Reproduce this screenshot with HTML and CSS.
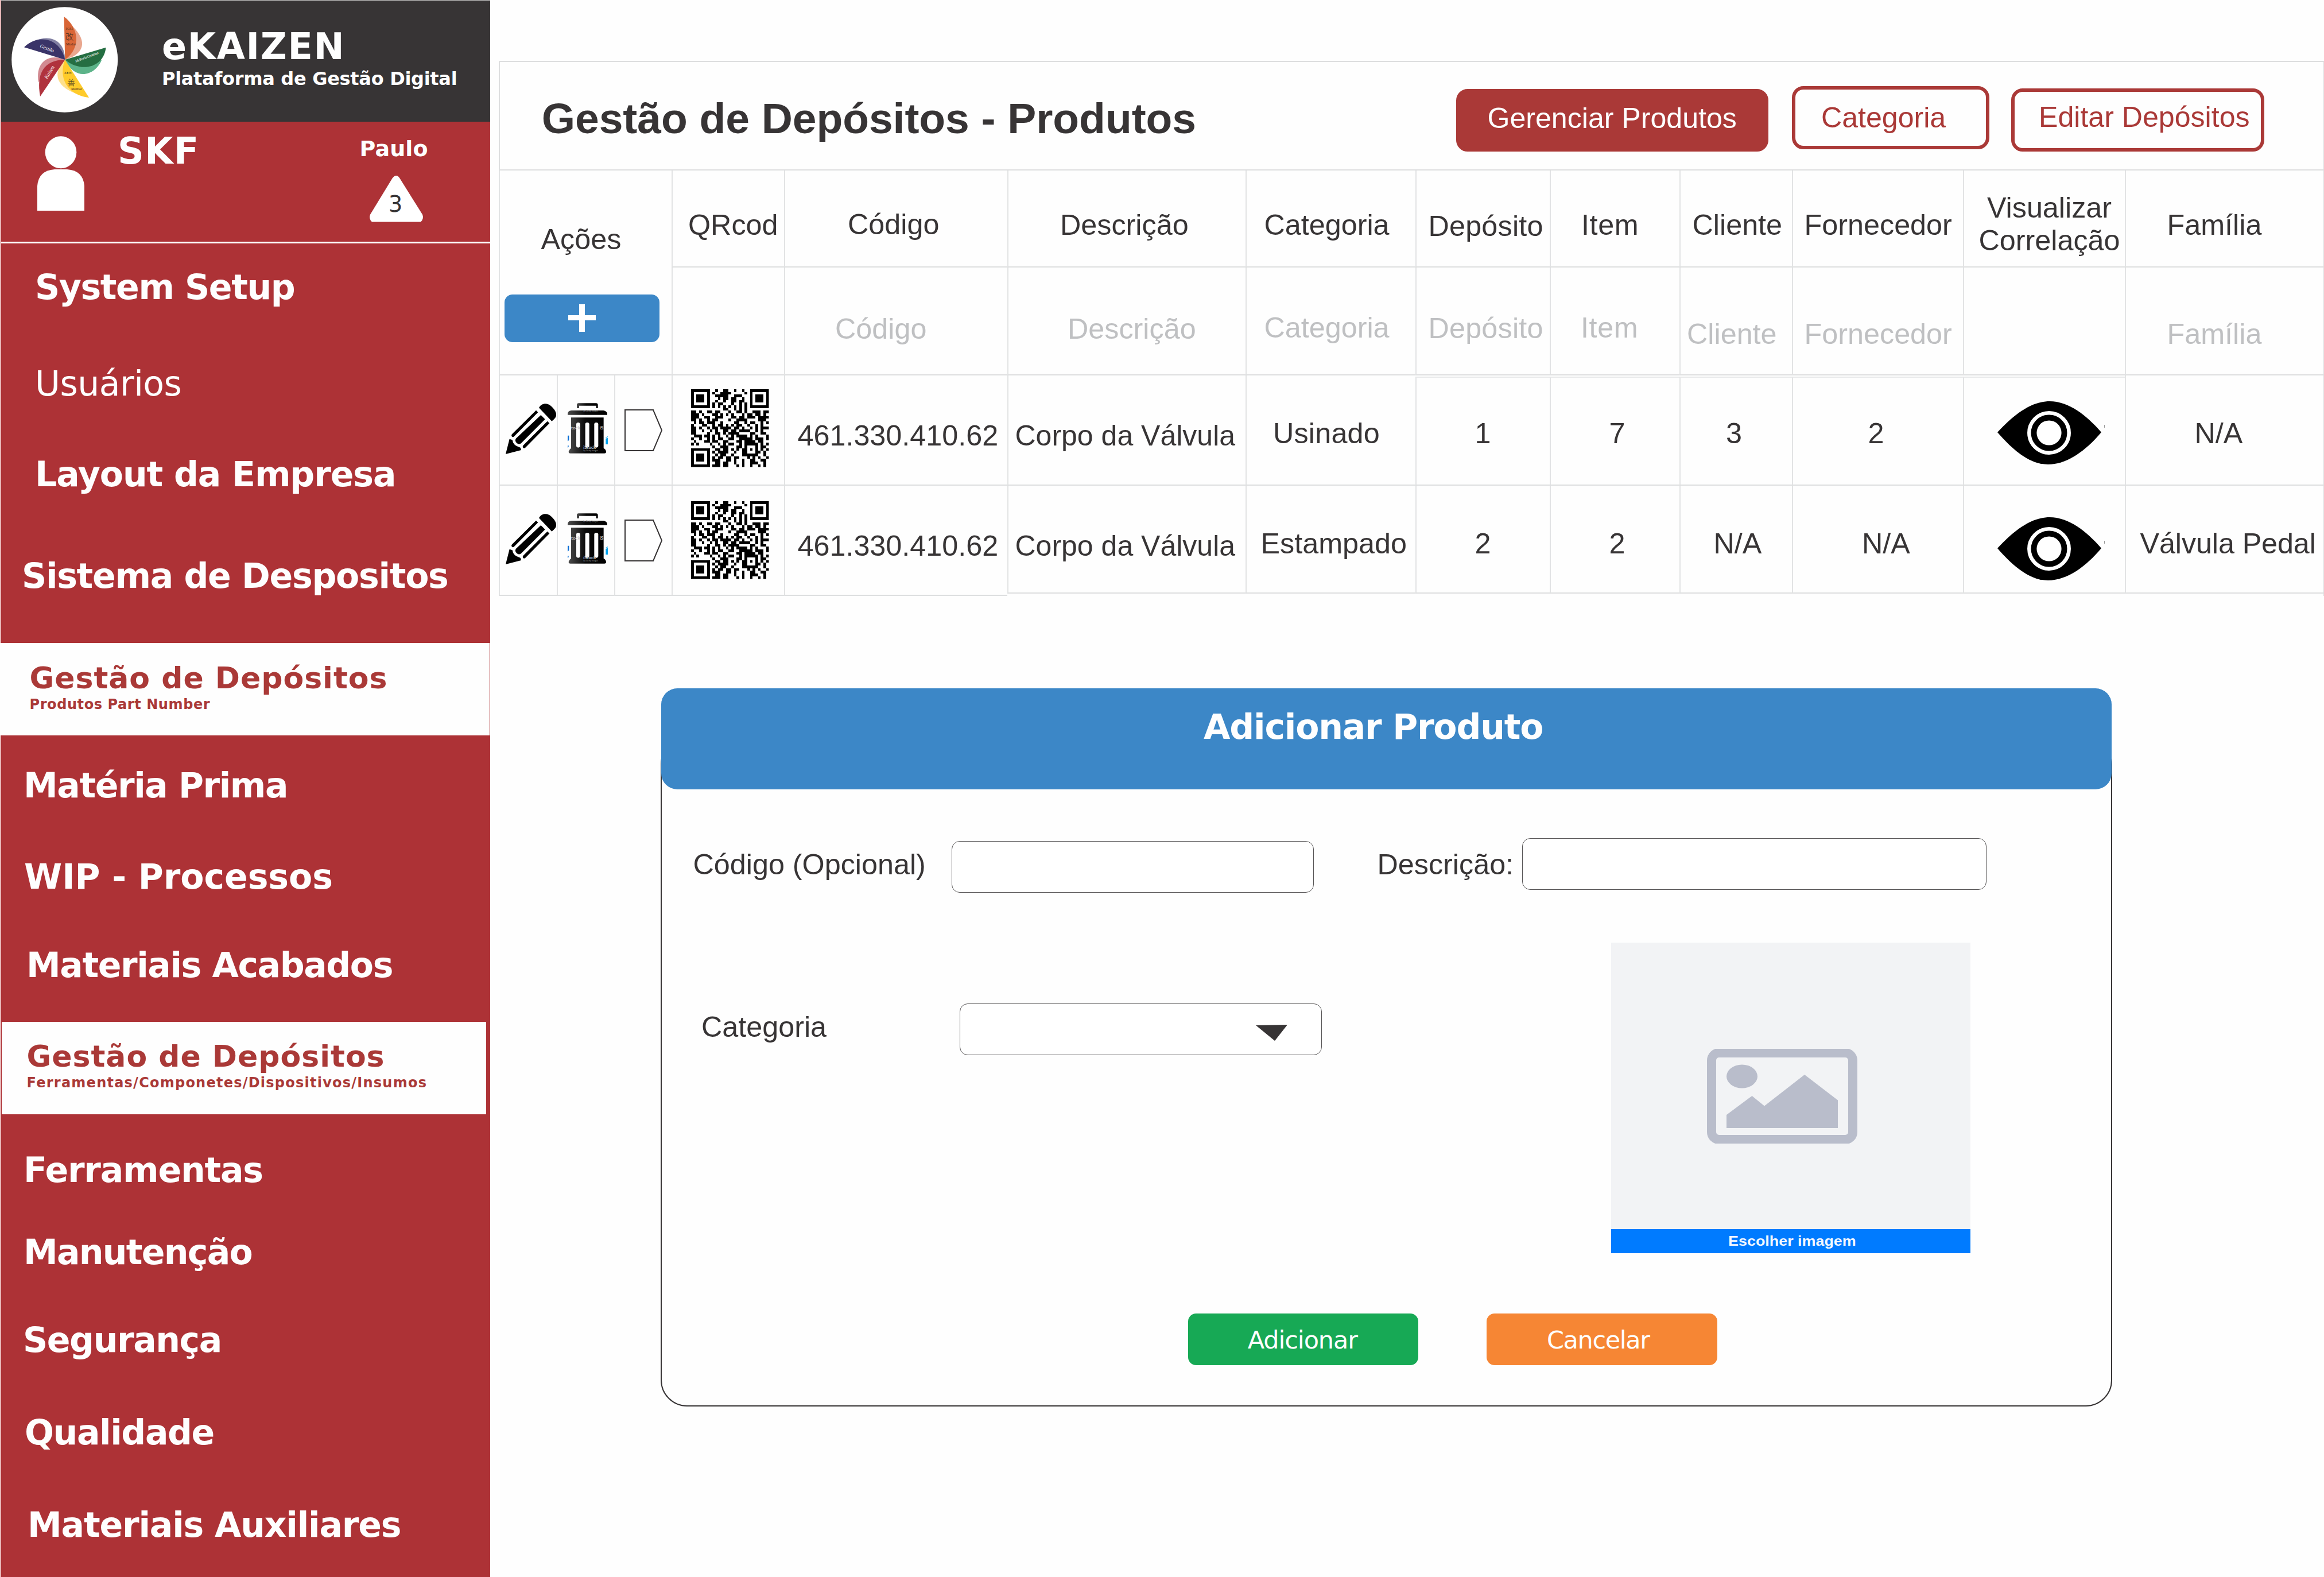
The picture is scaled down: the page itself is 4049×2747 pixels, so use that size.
FILE: index.html
```html
<!DOCTYPE html>
<html lang="pt-BR">
<head>
<meta charset="utf-8">
<title>eKAIZEN - Gestão de Depósitos</title>
<link rel="stylesheet" href="styles.css">
</head>
<body>
<svg class="defs" width="0" height="0">
  <defs>
    <linearGradient id="metal" x1="0" y1="0" x2="1" y2="0"><stop offset="0" stop-color="#4a4a4a"/><stop offset=".45" stop-color="#0a0a0a"/><stop offset="1" stop-color="#000"/></linearGradient>
    <symbol id="pencil" viewBox="0 0 264 264">
      <path d="M174 22 C186 -2 216 -6 236 12 C262 34 272 60 258 76 Q252 84 241 92 Z"/>
      <path d="M159 35 L169 46 L44 172 Q37 178 32 172 Q27 166 33 160 Z"/>
      <path d="M184 60 L206 82 L81 207 Q70 216 59 207 Q45 195 54 182 Z"/>
      <path d="M218 92 L229 103 L103 230 Q96 236 91 230 Q87 224 92 218 Z"/>
      <path d="M20 185 L35 190 Q38 220 77 230 L81 243 L0 264 Z"/>
    </symbol>
    <symbol id="trash" viewBox="0 0 210 264">
      <path d="M48 27 V10 Q48 1 57 1 H149 Q158 1 158 10 V27 H149 V14 H60 V27 Z" fill="url(#metal)"/>
      <path d="M0 62 V56 Q2 40 20 39 H187 Q205 42 207 56 V62 Z" fill="url(#metal)"/>
      <path d="M18 76 H188 V236 Q201 243 201 256 Q201 263 192 263 H14 Q5 263 5 254 Q7 243 18 236 Z" fill="url(#metal)"/>
      <rect x="45" y="102" width="20" height="131" rx="10" fill="#fff"/>
      <rect x="92" y="102" width="21" height="131" rx="10" fill="#fff"/>
      <rect x="139" y="102" width="21" height="131" rx="10" fill="#fff"/>
      <text class="mark" x="18" y="138">tock</text>
      <text class="mark" x="167" y="138">iS</text>
      <text class="mark" x="82" y="239">iStock</text>
      <text class="mark-small" x="82" y="252">by Getty Images</text>
      <text class="mark-small" x="82" y="45">by Getty Images</text>
      <path d="M0 170 h7 v24 l-7 6 Z M0 222 h5 v8 l-5 4 Z" fill="#0b6fd6"/>
      <path d="M199 186 l11 -4 v34 h-11 Z M199 180 l11 -6 v4 l-11 5 Z" fill="#00a4ef"/>
    </symbol>
    <symbol id="tag" viewBox="0 0 66 73"><path d="M1 1 H50 L65 36.5 L50 72 H1 Z" fill="#fff" stroke="#373435" stroke-width="2"/></symbol>
    <symbol id="eye" viewBox="0 0 188 112">
      <path d="M0 55 C28 25 58 1 91 1 C124 1 155 25 181 55 C155 86 122 111 88 111 C56 111 27 86 0 55 Z"/>
      <circle cx="90" cy="56" r="34.7" fill="none" stroke="#fff" stroke-width="6.5"/>
      <circle cx="90" cy="56" r="21.6" fill="#fff"/>
      <path d="M186 42 h1 v5 h-1 Z" fill="#999"/>
    </symbol>
    <symbol id="qr" viewBox="0 0 29 29"><path id="qr-path" shape-rendering="crispEdges"/></symbol>
  </defs>
</svg>
<div class="app">
  <aside class="sidebar">
    <header class="brand">
      <svg class="logo" viewBox="21 12 186 184">
        <ellipse cx="113.7" cy="104" rx="92.5" ry="91.7" fill="#fff"/>
        <path d="M123 42 C151 66 154 92 114.3 104 Z" fill="#e9a78f"/>
        <path d="M112.6 29 C137 47 144 82 114.3 104 Z" fill="#d96637"/>
        <path d="M178 105 C166 132 132 142 114.3 104 Z" fill="#5cb389"/>
        <path d="M185.5 82.7 C182 117 143 128 114.3 104 Z" fill="#256e42"/>
        <path d="M140 165 C100 154 90 128 114.3 104 Z" fill="#fee08c"/>
        <path d="M156 170 C118 166 102 135 114.3 104 Z" fill="#ffcb2b"/>
        <path d="M68 143 C62 108 86 92 114.3 104 Z" fill="#d28a91"/>
        <path d="M71 168 C64 130 76 104 114.3 104 Z" fill="#b0323d"/>
        <path d="M62 71 C86 60 114 68 114.3 104 Z" fill="#8280a3"/>
        <path d="M43 82.3 C67 58 106 66 114.3 104 Z" fill="#3a3468"/>
        <g class="logo-text">
          <text x="116" y="52">KAI</text><text class="kanji" x="115" y="69">改</text><text x="116" y="79">Mudar</text>
          <text class="light" x="133" y="109" transform="rotate(-21 133 109)" textLength="43">Melhoria Contínua</text>
          <text x="113" y="129">ZEN</text><text class="kanji" x="118" y="149">善</text><text x="125" y="157">Melhor</text>
          <text class="light big" x="83" y="138" transform="rotate(-58 83 138)">Kaizen</text>
          <text class="light big" x="70" y="82" transform="rotate(22 70 82)">Gestão</text>
        </g>
      </svg>
      <div>
        <div class="brand-name">eKAIZEN</div>
        <div class="brand-sub">Plataforma de Gestão Digital</div>
      </div>
    </header>
    <section class="user">
      <svg class="person" viewBox="0 0 82 130"><ellipse cx="41" cy="28.300" rx="27.300" ry="28" fill="#fff"/><path d="M0 130 V87 Q2 60 30 58 H52 Q80 60 82 87 V130 Z" fill="#fff"/></svg>
      <div class="company">SKF</div>
      <div class="account">
        <div class="user-name">Paulo</div>
        <svg class="alerts" viewBox="0 0 96 82"><path d="M41 5 Q48 -4 54 5 L94 69 Q97 76 91 82 H5 Q-1 76 2 69 Z" fill="#fff"/><text x="34" y="64">3</text></svg>
      </div>
    </section>
    <nav class="menu">
      <a class="item p59 setup">System Setup</a>
      <a class="item p59 regular">Usuários</a>
      <a class="item p59 layout">Layout da Empresa</a>
      <a class="item p36 deposits">Sistema de Despositos</a>
      <a class="group"><span class="group-title">Gestão de Depósitos</span><span class="group-sub">Produtos Part Number</span></a>
      <a class="item p39">Matéria Prima</a>
      <a class="item p40 wip">WIP - Processos</a>
      <a class="item p44 finished">Materiais Acabados</a>
      <a class="group group-inset"><span class="group-title">Gestão de Depósitos</span><span class="group-sub wide">Ferramentas/Componetes/Dispositivos/Insumos</span></a>
      <a class="item p39 tools">Ferramentas</a>
      <a class="item p39 upkeep">Manutenção</a>
      <a class="item p38">Segurança</a>
      <a class="item p42">Qualidade</a>
      <a class="item p46 aux">Materiais Auxiliares</a>
    </nav>
  </aside>
  <main class="content">
    <header class="page-head">
      <h1>Gestão de Depósitos - Produtos</h1>
      <div class="tabs">
        <div class="tab tab-active">Gerenciar Produtos</div>
        <div class="tab tab-category">Categoria</div>
        <div class="tab tab-edit">Editar Depósitos</div>
      </div>
    </header>
    <div class="thead">
      <div class="cell actions"><span>Ações</span>
        <div class="add"><svg viewBox="0 0 48 48"><path d="M19 0h10v19h19v9H29v20H19V28H0v-9h19Z" fill="#fff"/></svg></div>
      </div>
      <div class="cell">QRcod</div><div class="cell">Código</div><div class="cell">Descrição</div><div class="cell">Categoria</div><div class="cell">Depósito</div><div class="cell">Item</div><div class="cell">Cliente</div><div class="cell">Fornecedor</div><div class="cell two-line">Visualizar<br>Correlação</div><div class="cell">Família</div>
      <div class="cell filter"></div><div class="cell filter">Código</div><div class="cell filter">Descrição</div><div class="cell filter">Categoria</div><div class="cell filter">Depósito</div><div class="cell filter">Item</div><div class="cell filter low">Cliente</div><div class="cell filter low">Fornecedor</div><div class="cell filter"></div><div class="cell filter low">Família</div>
    </div>
    <div class="row first">
      <div class="cell"><svg class="i-pencil"><use href="#pencil"/></svg></div>
      <div class="cell"><svg class="i-trash"><use href="#trash"/></svg></div>
      <div class="cell"><svg class="i-tag"><use href="#tag"/></svg></div>
      <div class="cell"><svg class="i-qr"><use href="#qr"/></svg></div>
      <div class="cell">461.330.410.62</div><div class="cell">Corpo da Válvula</div><div class="cell">Usinado</div><div class="cell">1</div><div class="cell">7</div><div class="cell">3</div><div class="cell">2</div>
      <div class="cell"><svg class="i-eye"><use href="#eye"/></svg></div><div class="cell">N/A</div>
    </div>
    <div class="row last">
      <div class="cell"><svg class="i-pencil"><use href="#pencil"/></svg></div>
      <div class="cell"><svg class="i-trash"><use href="#trash"/></svg></div>
      <div class="cell"><svg class="i-tag"><use href="#tag"/></svg></div>
      <div class="cell"><svg class="i-qr"><use href="#qr"/></svg></div>
      <div class="cell">461.330.410.62</div><div class="cell">Corpo da Válvula</div><div class="cell">Estampado</div><div class="cell">2</div><div class="cell">2</div><div class="cell">N/A</div><div class="cell">N/A</div>
      <div class="cell"><svg class="i-eye"><use href="#eye"/></svg></div><div class="cell">Válvula Pedal</div>
    </div>
    <section class="dialog">
      <h2>Adicionar Produto</h2>
      <div class="dialog-body">
        <div class="fields">
          <label class="l-code">Código (Opcional)</label><div class="input in-code"></div>
          <label class="l-desc">Descrição:</label><div class="input in-desc"></div>
        </div>
        <div class="fields second">
          <label class="l-cat">Categoria</label>
          <div class="input select"><svg viewBox="0 0 55 28"><path d="M0 1 L55 0 L33 28 Z" fill="#373435"/></svg></div>
          <div class="upload">
            <div class="preview"><svg viewBox="0 0 264 165"><rect x="9" y="7" width="246" height="151" rx="13" fill="none" stroke="#b9bdcb" stroke-width="16"/><ellipse cx="62" cy="48" rx="27" ry="20.500" fill="#b9bdcb"/><path d="M35 115 L79.500 82 L101 99.500 L171 45 L229 89.500 V138 H35 Z" fill="#b9bdcb"/></svg></div>
            <div class="choose"><span>Escolher imagem</span></div>
          </div>
        </div>
        <div class="buttons"><div class="btn ok">Adicionar</div><div class="btn cancel">Cancelar</div></div>
      </div>
    </section>
  </main>
</div>
<script src="qr.js"></script>
</body>
</html>
```
FILE: styles.css
```css
* { box-sizing: border-box; }
body { margin: 0; background: #fefefe; color: #373435; font-family: "Liberation Sans", Arial, sans-serif; font-size: 50.3px; line-height: 58px; }
svg { display: block; flex: none; }
.defs { position: absolute; }
.app { display: flex; width: 4049px; height: 2747px; overflow: hidden; }

/* sidebar */
.sidebar { flex: none; width: 854px; border-left: 2px solid #e9b9ba; background: #ad3236; color: #fefefe; font-family: "DejaVu Sans", Verdana, sans-serif; font-weight: bold; }
.brand { display: flex; height: 212px; border-top: 1px solid #c8c8c8; background: #373435; padding: 11px 0 0 18px; }
.logo { width: 186px; height: 184px; }
.logo-text { font: 6.500px "Liberation Serif", serif; fill: #3a2a20; }
.logo-text .kanji { font: 14px "Noto Sans CJK JP", sans-serif; font-weight: 300; }
.logo-text .light { fill: #fff; font-style: italic; }
.logo-text .big { font-size: 9px; }
.brand > div { padding: 34px 0 0 76px; white-space: nowrap; }
.brand-name { font-size: 63.500px; line-height: 70px; letter-spacing: 1.680px; }
.brand-sub { font-size: 32px; line-height: 40px; margin-top: 1px; letter-spacing: -0.3px; }
.user { display: flex; height: 212px; border-bottom: 3px solid #fefefe; }
.person { width: 82px; height: 130px; margin: 25px 0 0 63px; }
.company { width: 421.500px; margin: 16px 0 0 58px; font-size: 63.500px; line-height: 70px; letter-spacing: 1.400px; }
.account { padding-top: 23.600px; }
.user-name { font-size: 38px; line-height: 46px; letter-spacing: 0.1px; }
.alerts { width: 95px; height: 82px; margin: 23.400px 0 0 16px; overflow: visible; }
.alerts text { font-size: 39px; font-weight: normal; fill: #373435; }
.menu { display: grid; grid-template-rows: 152px 184px 131px 229px 161px 174.400px 143.600px 181px 161px 193.600px 92.200px 214.800px 107.200px 198px; }
.item { display: flex; align-items: center; font-size: 60px; letter-spacing: -1.400px; white-space: nowrap; }
.regular { font-weight: normal; letter-spacing: -0.5px; }
.layout { letter-spacing: -1.080px; }
.deposits { padding-bottom: 5px; letter-spacing: -1.290px; }
.wip { letter-spacing: -0.050px; }
.finished { padding-bottom: 16px; }
.tools { letter-spacing: -1.170px; }
.upkeep { letter-spacing: -1.700px; }
.aux { padding-top: 16px; letter-spacing: -1.150px; }
.p36 { padding-left: 36px; } .p38 { padding-left: 38px; } .p39 { padding-left: 39px; } .p40 { padding-left: 40px; }
.p42 { padding-left: 41px; } .p44 { padding-left: 44px; } .p46 { padding-left: 46px; } .p59 { padding-left: 59px; }
.group { display: flex; flex-direction: column; margin-left: -2px; margin-right: 1px; padding: 30.500px 0 0 51.500px; background: #fefefe; color: #aa3937; white-space: nowrap; }
.group-title { font-size: 52px; line-height: 60px; letter-spacing: 1px; }
.group-sub { margin-top: 1px; font-size: 24px; line-height: 30px; letter-spacing: 0.580px; }
.group-sub.wide { letter-spacing: 1.240px; }
.group-inset { margin-left: 1px; margin-right: 7px; padding-left: 43.600px; }

/* page header */
.content { flex: none; width: 3180px; margin-left: 15px; padding-top: 106px; }
.page-head { display: flex; height: 191px; border: 2px solid #dddedf; border-right-width: 1px; }
h1 { margin: 53px 0 0 72.700px; font-size: 75px; line-height: 90px; letter-spacing: -0.050px; white-space: nowrap; }
.tabs { display: flex; align-items: flex-start; margin: 42px 103px 0 auto; }
.tab { height: 110px; border: 6px solid #aa3937; border-radius: 20px; color: #aa3937; font-size: 50.100px; white-space: nowrap; display: flex; align-items: center; }
.tab-active { width: 544px; margin: 5px 41px 0 0; padding: 0 0 8px 48.500px; height: 109px; background: #aa3937; color: #fefefe; }
.tab-category { width: 344px; margin-right: 38px; padding-left: 45px; }
.tab-edit { width: 441px; margin-top: 4px; padding: 0 0 11px 42px; }

/* product table */
.thead, .row { display: grid; border-right: 1px solid #dddedf; }
.thead { grid-template: 169px 188px / 301px 196px 389px 415px 296px 234px 226px 196px 298px 282px 347px; }
.row { grid-template-columns: 101px 100px 100px 196px 389px 415px 296px 234px 226px 196px 298px 282px 347px; }
.cell { border-left: 2px solid #e2e3e4; border-bottom: 2px solid #dddedf; white-space: nowrap; padding-top: 66px; }
.actions { grid-row: span 2; padding-top: 90.600px; }
.actions span { display: block; padding-left: 71.500px; }
.add { display: flex; align-items: center; justify-content: center; width: 270px; height: 83px; margin: 67px 0 0 8px; border-radius: 14px; background: #3c87c7; }
.add svg { width: 48px; height: 48px; }
.thead .cell:nth-child(2) { padding-left: 27px; }
.thead .cell:nth-child(3) { padding-left: 109px; padding-top: 65px; }
.thead .cell:nth-child(4) { padding-left: 90px; }
.thead .cell:nth-child(5), .thead .cell:nth-child(15) { padding-left: 30.500px; }
.thead .cell:nth-child(6), .thead .cell:nth-child(16) { padding-left: 20.500px; letter-spacing: 0.2px; }
.thead .cell:nth-child(6) { padding-top: 67.500px; }
.thead .cell:nth-child(7) { padding-left: 53px; letter-spacing: 0.6px; }
.thead .cell:nth-child(8) { padding-left: 20.500px; }
.thead .cell:nth-child(9), .thead .cell:nth-child(19) { padding-left: 19.600px; }
.thead .two-line { padding: 35.600px 4px 0 21px; line-height: 57px; text-align: center; }
.thead .cell:nth-child(11), .thead .cell:nth-child(21) { padding-left: 71.500px; }
.filter { padding-top: 75.600px; color: #bfc0c2; }
.thead .cell:nth-child(13) { padding-left: 87px; padding-top: 77.600px; }
.thead .cell:nth-child(14) { padding-left: 103px; padding-top: 77.600px; }
.thead .cell:nth-child(16) { padding-top: 77px; }
.thead .cell:nth-child(17) { padding-left: 52px; letter-spacing: 0.6px; }
.thead .cell:nth-child(18) { padding-left: 11px; }
.filter.low { padding-top: 86.600px; }
.row.first { height: 192px; }
.row.last { height: 192px; }
.row .cell { padding-top: 71.500px; }
.row .cell:nth-child(1) { padding: 49px 0 0 10px; }
.row .cell:nth-child(2) { padding: 48px 0 0 17px; }
.row .cell:nth-child(3) { padding: 59px 0 0 16px; }
.row .cell:nth-child(4) { padding: 24px 0 0 32px; }
.row.last .cell:nth-child(4) { padding-top: 27px; }
.row .cell:nth-child(5) { padding: 75.600px 0 0 21.500px; }
.row .cell:nth-child(6) { padding: 75.600px 0 0 11.500px; font-size: 50px; }
.row .cell:nth-child(7) { padding-left: 46px; letter-spacing: 0.2px; }
.row.last .cell:nth-child(7) { padding-left: 24.500px; letter-spacing: 0; }
.row .cell:nth-child(8), .row .cell:nth-child(9) { padding-left: 101.500px; }
.row .cell:nth-child(10) { padding-left: 79px; }
.row.last .cell:nth-child(10) { padding-left: 57.500px; }
.row .cell:nth-child(11) { padding-left: 130.500px; }
.row.last .cell:nth-child(11) { padding-left: 120px; }
.row .cell:nth-child(12) { padding: 43px 0 0 58px; }
.row.last .cell:nth-child(12) { padding-top: 54px; }
.row .cell:nth-child(13) { padding-left: 119.500px; }
.row.last .cell:nth-child(13) { padding-left: 24.500px; letter-spacing: -0.1px; }
.row.first .cell:nth-child(n+8):nth-child(-n+12) { margin-top: 2px; border-top: 2px solid #e8e9ea; padding-top: 67.500px; }
.row.first .cell:nth-child(12):nth-child(n+8) { padding-top: 40px; }
.row.last .cell:nth-child(n+6) { margin-bottom: 4px; }
.i-pencil { width: 88px; height: 88px; }
.i-trash { width: 70px; height: 88px; }
.i-tag { width: 66px; height: 73px; }
.i-qr { width: 135.500px; height: 135.500px; }
.i-eye { width: 188px; height: 112px; }
.mark { font: bold 24px Lato, sans-serif; fill: #c8c8c8; }
.mark-small { font: 11px Lato, sans-serif; fill: #8a8a8a; }

/* add product dialog */
.dialog { width: 2529px; margin: 161px 0 0 281.500px; }
h2 { position: relative; z-index: 1; height: 176px; margin: 0 1px; padding: 27px 0 0 945.600px; border-radius: 28px; background: #3c87c7; color: #fefefe; font: bold 60px/80px "DejaVu Sans", Verdana, sans-serif; letter-spacing: -1.190px; }
.dialog-body { height: 1165px; margin-top: -90px; padding-top: 173px; border: 2px solid #373435; border-radius: 46px; }
.fields { display: flex; align-items: flex-start; padding-left: 55px; white-space: nowrap; }
.fields.second { margin-top: 87px; padding-left: 69.500px; }
.input { flex: none; height: 90px; border: 1px solid #565455; border-radius: 14px; background: #fff; }
label { flex: none; }
.l-code { width: 450px; margin-top: 16.600px; }
.in-code { width: 631px; margin: 5px 111px 0 0; }
.l-desc { width: 252.600px; margin-top: 16.600px; }
.in-desc { width: 809px; }
.l-cat { width: 449.500px; margin-top: 117.600px; }
.select { width: 631px; margin: 106px 504px 0 0; padding: 36px 0 0 515px; }
.select svg { width: 55px; height: 28px; }
.upload { width: 626px; }
.preview { height: 499px; padding: 185px 0 0 166px; background: #f2f3f5; }
.preview svg { width: 264px; height: 165px; }
.choose { height: 42px; background: #007bff; color: #f4f8ff; font-size: 24px; font-weight: bold; line-height: 42px; text-align: center; }
.choose span { display: inline-block; transform: scaleX(1.12); margin-left: 5px; }
.buttons { display: flex; gap: 119px; margin: 105px 0 0 917px; font-family: "DejaVu Sans", Verdana, sans-serif; font-size: 43px; letter-spacing: -1.100px; }
.btn { display: flex; align-items: center; justify-content: center; width: 401.500px; height: 90px; padding-top: 2px; border-radius: 14px; color: #fefefe; }
.ok { background: #17a955; padding-right: 2px; }
.cancel { background: #f68634; padding-right: 13px; letter-spacing: -1.400px; }
```
FILE: qr.js
```js
// Product QR symbol: one string per module row, '#' is a dark module.
const modules = [
  '#######..#..##..#..#..#######',
  '#.....#.#..####.....#.#.....#',
  '#.###.#..#####..###...#.###.#',
  '#.###.#...#.##.##..#..#.###.#',
  '#.###.#..#..#..##.##..#.###.#',
  '#.....#.#.##...#..#.#.#.....#',
  '#######.#.#.#.#.#.#.#.#######',
  '............##..#.#.#........',
  '##.#..##.##...#..##.#..###.##',
  '###.#...##.#.#.#...#.##.##.#.',
  '###..##..###...##.##.###.####',
  '##.#..#.##....#..####....###.',
  '.#.##.###..#....##..#.##..#.#',
  '#...##..#.##.#.#.##..#..#.#..',
  '##.#..#.##.####.##.#..#.#.###',
  '##..#..#.#..##.##.####..#.#..',
  '##....#..##.#.####....##..##.',
  '.###.##.#.#..#.#.####.#.#...#',
  '#..#..#.#.##..##..#####.###.#',
  '.#...##.##..##...##.####.##..',
  '#.#....#..#.#.##..#.#####.#.#',
  '........#..###...##.#...#.##.',
  '#######..##.##.#.#.##.#.#.#.#',
  '#.....#.#.####..#..##...##.#.',
  '#.###.#..#.##..#...######..#.',
  '#.###.#.#.##.##.##...#.#.#..#',
  '#.###.#.###..##.#..#..##..##.',
  '#.....#..##.##..#..#..###..#.',
  '#######.###.##...#.#..#..#.#.'
];

let d = '';
modules.forEach((row, y) => [...row].forEach((m, x) => { if (m === '#') d += `M${x} ${y}h1v1h-1z`; }));
document.getElementById('qr-path').setAttribute('d', d);
```
